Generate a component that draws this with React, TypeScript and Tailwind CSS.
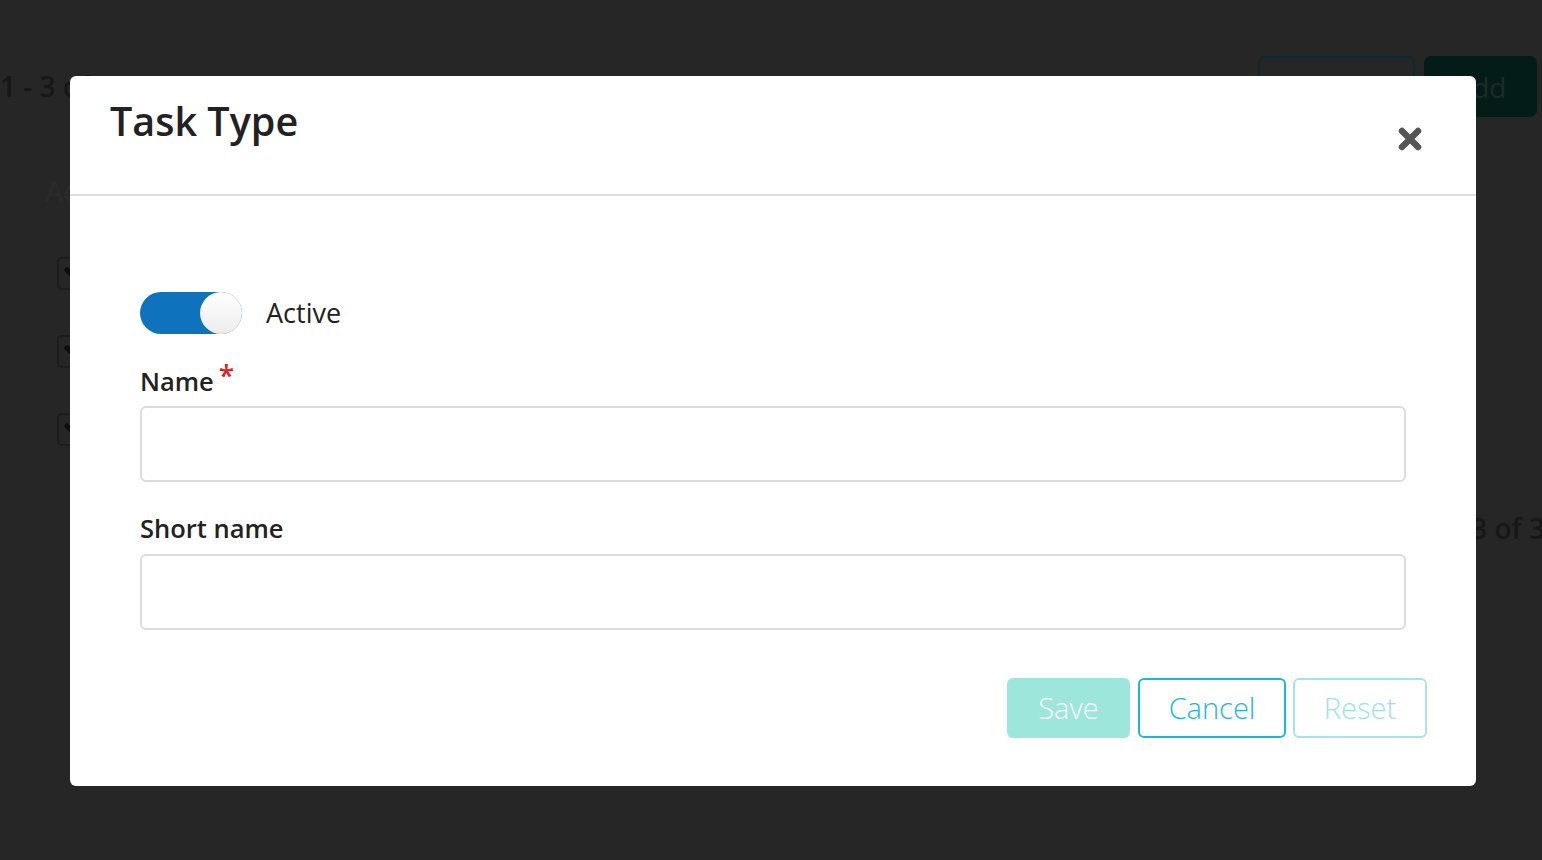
import React from "react";

function EditBox() {
  return (
    <div className="w-[34px] h-[33px] rounded-[5px] border-2 border-[#1c1c1c] flex items-center justify-center">
      <svg width="20" height="20" viewBox="0 0 20 20">
        <path d="M3 6 L14 17" stroke="#0d0d0d" strokeWidth="5" strokeLinecap="round" />
      </svg>
    </div>
  );
}

function CloseIcon() {
  return (
    <svg width="24" height="24" viewBox="0 0 24 24">
      <path d="M4 4 L20 20 M20 4 L4 20" stroke="#555555" strokeWidth="6.5" strokeLinecap="round" />
    </svg>
  );
}

export default function App() {
  return (
    <div className="relative w-[1542px] h-[860px] overflow-hidden bg-[#262626] font-['Open_Sans',sans-serif]">
      {/* dimmed page behind the dialog */}
      <div className="flex flex-col">
        <div className="flex items-center justify-between pt-[56px] pr-[5px]">
          <span className="text-[28px] font-semibold text-[#171717] leading-[61px]">1 - 3 of 3</span>
          <div className="flex gap-[9px]">
            <div className="w-[157px] h-[61px] rounded-[7px] border-2 border-[#0b2a33] flex items-center justify-center text-[28px] text-[#222]">
              Refresh
            </div>
            <div className="w-[113px] h-[61px] rounded-[7px] bg-[#031c18] flex items-center justify-center text-[28px] text-[#1f2a28]">
              Add
            </div>
          </div>
        </div>
        <div className="pl-[45px] pt-[56px] text-[28px] font-semibold text-[#2a2a2a] leading-[36px]">Active</div>
        <div className="flex flex-col gap-[45px] pl-[57px] pt-[48px]">
          <EditBox />
          <EditBox />
          <EditBox />
        </div>
        <div className="flex justify-end mr-[-3px] pt-[64px] text-[28px] font-semibold text-[#171717] leading-[36px]">
          1 - 3 of 3
        </div>
      </div>

      {/* dialog */}
      <div className="absolute left-[70px] top-[76px] w-[1406px] h-[710px] bg-white rounded-[6px] flex flex-col">
        <div className="h-[120px] border-b-2 border-[#dedede] flex items-start justify-between pl-[40px] pr-[54px]">
          <h2 className="pt-[25px] text-[39.5px] leading-[40px] font-semibold text-[#222]">Task Type</h2>
          <button className="mt-[51px]">
            <CloseIcon />
          </button>
        </div>

        <div className="flex flex-col px-[70px] pt-[96px]">
          <div className="flex items-center gap-[24px]">
            <div className="w-[102px] h-[42px] rounded-full bg-[#0f72bd] flex justify-end">
              <div className="w-[42px] h-[42px] rounded-full bg-gradient-to-b from-white to-[#ececec]" />
            </div>
            <span className="text-[27px] text-[#222] leading-[42px]">Active</span>
          </div>

          <label className="mt-[29px] mb-[7px] text-[25.5px] font-semibold text-[#222] leading-[36px]">
            Name
            <span className="relative top-[-5px] ml-[5px] text-[28px] leading-none text-[#e02020]">*</span>
          </label>
          <input className="h-[76px] rounded-[6px] border-2 border-[#dcdcdc] outline-none" />

          <label className="mt-[28px] mb-[8px] text-[25.5px] font-semibold text-[#222] leading-[36px]">
            Short name
          </label>
          <input className="h-[76px] rounded-[6px] border-2 border-[#dcdcdc] outline-none" />
        </div>

        <div className="flex justify-end gap-[8px] pr-[49px] pt-[48px]">
          <button className="w-[123px] h-[60px] rounded-[6px] bg-[#9de6db] text-white text-[29px] font-light">
            Save
          </button>
          <button className="w-[148px] h-[60px] rounded-[6px] border-2 border-[#1bb6de] text-[#1bb6de] text-[29px] font-light">
            Cancel
          </button>
          <button className="ml-[-1px] w-[134px] h-[60px] rounded-[6px] border-2 border-[#a6e3f1] text-[#9ee0f0] text-[29px] font-light">
            Reset
          </button>
        </div>
      </div>
    </div>
  );
}
